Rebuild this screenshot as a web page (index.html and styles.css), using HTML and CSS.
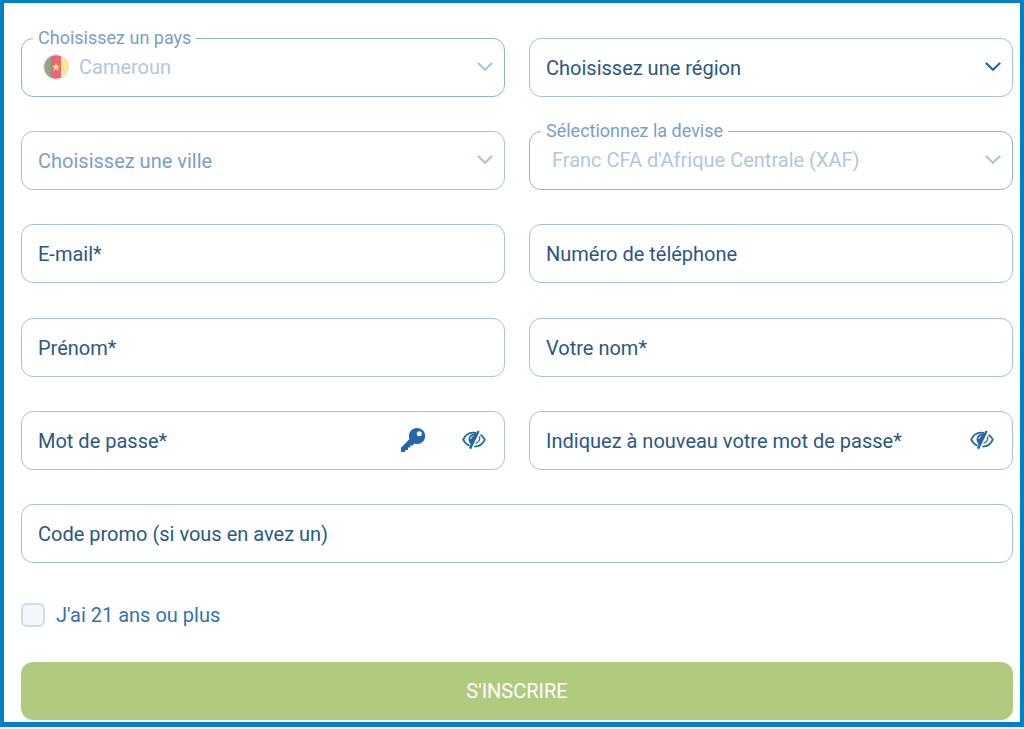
FILE: index.html
```html
<!DOCTYPE html>
<html lang="fr">
<head>
<meta charset="utf-8">
<meta name="viewport" content="width=device-width, initial-scale=1">
<title>Inscription</title>
<link rel="stylesheet" href="styles.css">
</head>
<body>
<svg class="sprite" aria-hidden="true">
  <symbol id="chevron" viewBox="0 0 16 10"><path d="M1.500 1.500 8 7.800l6.500-6.300" fill="none" stroke="currentColor" stroke-width="2.200" stroke-linecap="round"/></symbol>
  <symbol id="eye-off" viewBox="0 0 24 20">
    <path d="M14 3C8 1.800 3.400 4.800 1.200 9.700c1.400 3 3.500 5 6.300 6" fill="none" stroke="currentColor" stroke-width="1.800"/>
    <path d="M18.600 4.700c1.900 1.200 3.300 2.900 4.200 5-2 4.500-5.800 6.900-10.500 6.900" fill="none" stroke="currentColor" stroke-width="1.800"/>
    <path d="M14.500 3.600C9.500 2.400 4.800 6.500 7.200 12.200l2 3z" fill="currentColor"/>
    <path d="M8.800 9c.1-1.700 1-2.700 2.500-3" fill="none" stroke="#fff" stroke-width="1"/>
    <path d="M16.600 1 8 18.600" stroke="currentColor" stroke-width="2.400"/>
    <path d="M17.600 6.500c.6 2.800-1 5.600-4 7" fill="none" stroke="currentColor" stroke-width="1.300"/>
  </symbol>
</svg>
<form class="signup">
  <div class="fields">
    <div class="field field-floating">
      <label for="country">Choisissez un pays</label>
      <select id="country" class="with-flag" disabled><option>Cameroun</option></select>
      <svg class="flag" viewBox="0 0 26 26" aria-hidden="true">
        <defs><clipPath id="round"><circle cx="13" cy="13" r="12"/></clipPath></defs>
        <g clip-path="url(#round)">
          <path d="M0 0h8v26H0z" fill="#8fa783"/>
          <path d="M8 0h10v26H8z" fill="#ea657c"/>
          <path d="M18 0h8v26h-8z" fill="#ffe88c"/>
        </g>
        <path d="m13 8.800 1.100 3h3.200l-2.500 2 .9 3.100-2.700-1.800-2.700 1.800.9-3.100-2.500-2h3.200z" fill="#ffdf83"/>
        <circle cx="13" cy="13" r="12.400" fill="none" stroke="#dce5ee" stroke-width="1.200"/>
      </svg>
      <svg class="chevron" aria-hidden="true"><use href="#chevron"/></svg>
    </div>
    <div class="field">
      <label for="region">Choisissez une région</label>
      <select id="region"><option value=""></option></select>
      <svg class="chevron" aria-hidden="true"><use href="#chevron"/></svg>
    </div>
    <div class="field field-disabled">
      <label for="city">Choisissez une ville</label>
      <select id="city" disabled><option value=""></option></select>
      <svg class="chevron" aria-hidden="true"><use href="#chevron"/></svg>
    </div>
    <div class="field field-floating">
      <label for="currency">Sélectionnez la devise</label>
      <select id="currency" disabled><option>Franc CFA d'Afrique Centrale (XAF)</option></select>
      <svg class="chevron" aria-hidden="true"><use href="#chevron"/></svg>
    </div>
    <div class="field"><label for="email">E-mail*</label><input id="email" type="email"></div>
    <div class="field"><label for="phone">Numéro de téléphone</label><input id="phone" type="tel"></div>
    <div class="field"><label for="first">Prénom*</label><input id="first" type="text"></div>
    <div class="field"><label for="last">Votre nom*</label><input id="last" type="text"></div>
    <div class="field">
      <label for="password">Mot de passe*</label>
      <input id="password" type="password">
      <div class="tools">
        <button type="button" aria-label="Générer un mot de passe">
          <svg class="key" viewBox="0 0 24 24" aria-hidden="true"><path fill="currentColor" fill-rule="evenodd" d="M16 0a8 8 0 1 1-2.600 15.500L11.500 17.400H9.300v2.200H7v2.300H4.800L3.500 24H0v-4.300L8.500 11A8 8 0 0 1 16 0zm2.300 3.200a2.500 2.500 0 1 0 0 5 2.500 2.500 0 0 0 0-5z"/></svg>
        </button>
        <button type="button" aria-label="Afficher le mot de passe"><svg class="eye" aria-hidden="true"><use href="#eye-off"/></svg></button>
      </div>
    </div>
    <div class="field">
      <label for="confirm">Indiquez à nouveau votre mot de passe*</label>
      <input id="confirm" type="password">
      <div class="tools">
        <button type="button" aria-label="Afficher le mot de passe"><svg class="eye" aria-hidden="true"><use href="#eye-off"/></svg></button>
      </div>
    </div>
    <div class="field field-wide"><label for="promo">Code promo (si vous en avez un)</label><input id="promo" type="text"></div>
  </div>
  <div class="consent">
    <input id="age" type="checkbox">
    <label for="age">J'ai 21 ans ou plus</label>
  </div>
  <button class="submit" type="submit">S'INSCRIRE</button>
</form>
</body>
</html>
```
FILE: styles.css
```css
* {
  box-sizing: border-box;
}

body {
  margin: 0;
  background: #fff;
  color: #2a5885;
  font-family: Roboto, "Liberation Sans", sans-serif;
  font-size: 20px;
  line-height: 24px;
}

.sprite {
  position: absolute;
  width: 0;
  height: 0;
}

.signup {
  display: flex;
  flex-direction: column;
  min-height: calc(100vh - 2px);
  padding: 35px 7px 2px 17px;
  border: solid #0081c3;
  border-width: 3px 4px 5px;
}

/* Rows share the free height between them */
.fields {
  flex: 1;
  display: grid;
  grid-template-columns: 1fr 1fr;
  column-gap: 24px;
  row-gap: 24px;
  align-content: space-between;
}

/* Control, label and icons are stacked in one grid cell */
.field {
  display: grid;
  align-items: center;
  color: #2268a8;
}

.field > * {
  grid-area: 1 / 1;
}

.field-wide {
  grid-column: 1 / -1;
}

.field input,
.field select {
  appearance: none;
  width: 100%;
  height: 59px;
  margin: 0;
  padding: 0 48px 2px 22px;
  border: 1px solid #a5c2de;
  border-radius: 12px;
  background: #fff;
  color: #2a5885;
  font: inherit;
}

.field select:disabled {
  color: #b2c7dc;
  opacity: 1;
}

.field select.with-flag {
  padding-left: 57px;
}

.field > label {
  z-index: 1;
  justify-self: start;
  margin-left: 17px;
  padding-top: 1px;
  color: #2a5885;
  pointer-events: none;
}

.field-disabled > label {
  color: #7aa0c6;
}

.field-floating select {
  border-color: #8fb3d4;
}

.field-floating > label {
  align-self: start;
  margin: -12px 0 0 12px;
  padding: 0 5px;
  background: #fff;
  color: #7aa0c6;
  font-size: 18px;
}

.flag {
  z-index: 1;
  width: 26px;
  height: 26px;
  margin: 0 0 2px 22px;
}

.chevron {
  z-index: 1;
  justify-self: end;
  width: 16px;
  height: 10px;
  margin: 0 12px 2px 0;
  pointer-events: none;
}

.field-disabled .chevron,
.field-floating .chevron {
  color: #adc5dc;
}

.tools {
  z-index: 1;
  display: flex;
  align-items: center;
  justify-self: end;
  gap: 37px;
  margin-right: 19px;
}

.tools button {
  display: flex;
  padding: 0;
  border: 0;
  background: none;
  color: #2268a8;
}

.key {
  width: 24px;
  height: 24px;
}

.eye {
  width: 24px;
  height: 20px;
}

.consent {
  display: flex;
  align-items: center;
  gap: 11px;
  margin: 40px 0 35px;
  color: #3373ae;
}

.consent input {
  appearance: none;
  width: 24px;
  height: 24px;
  margin: 0;
  border: 2px solid #cfdde9;
  border-radius: 6px;
  background: #f2f7fc;
}

.submit {
  height: 58px;
  border: 0;
  border-radius: 12px;
  background: #b0ca80;
  color: #fff;
  font: inherit;
}
```
